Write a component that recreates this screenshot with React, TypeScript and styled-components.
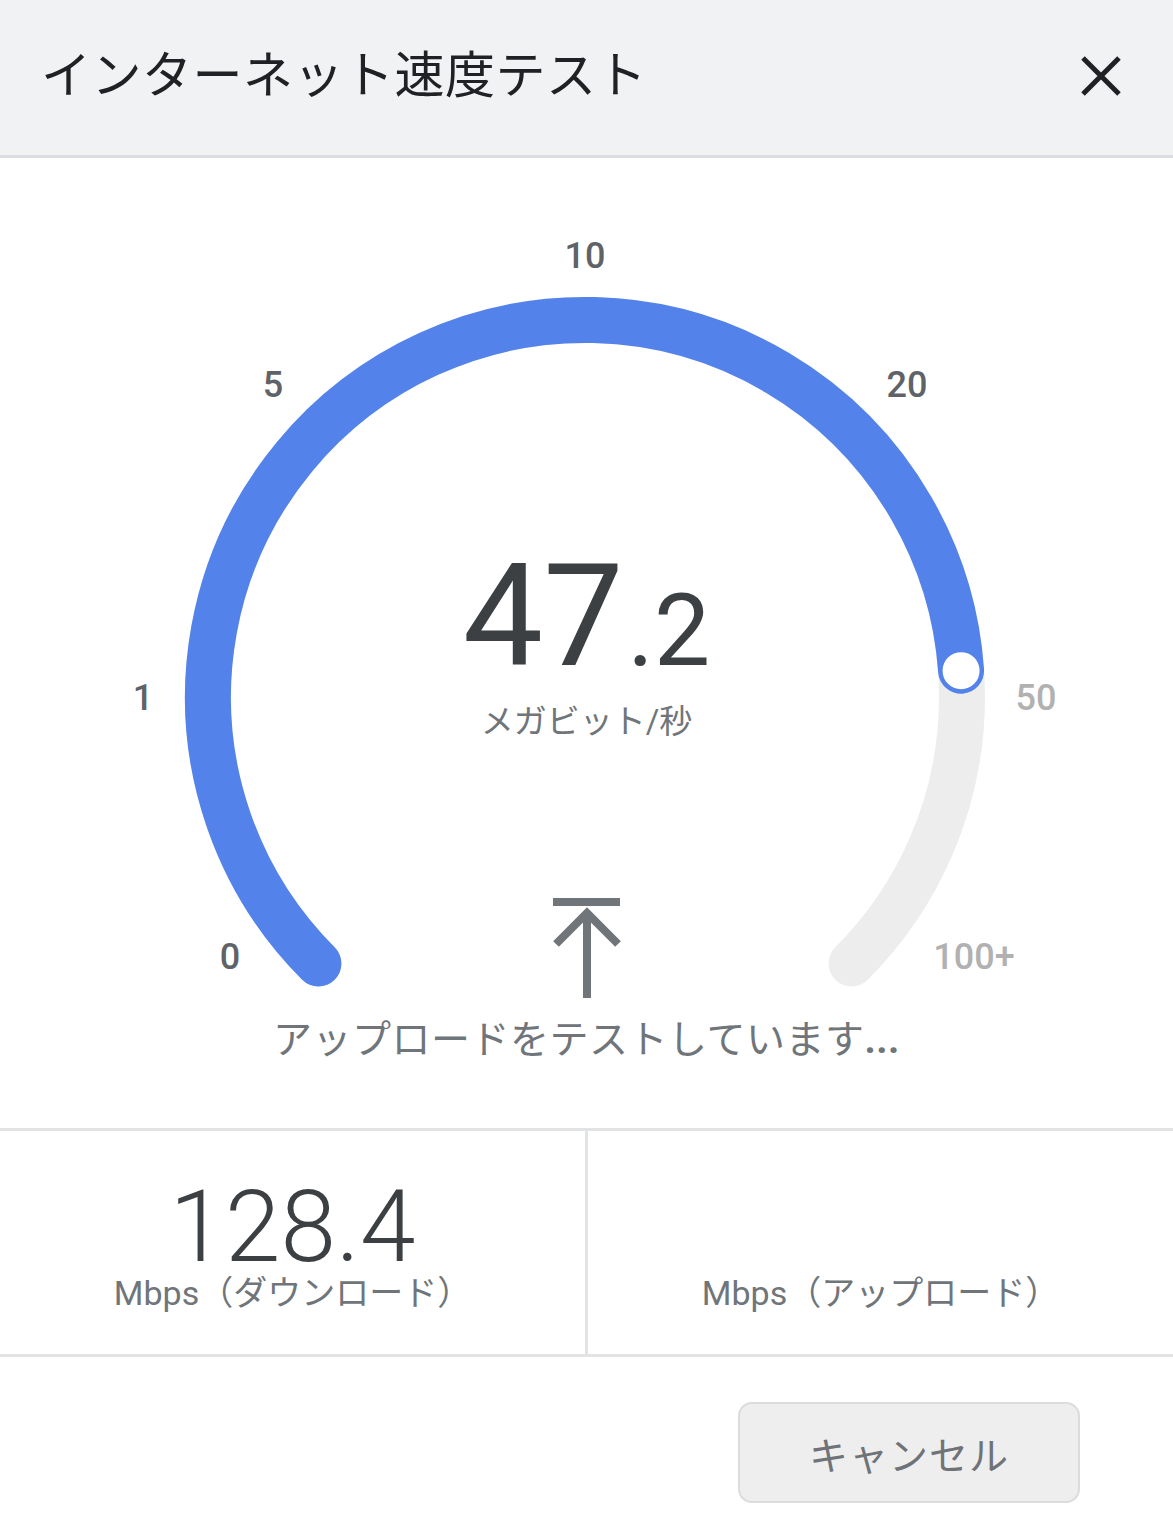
import React from "react";
import styled, { createGlobalStyle } from "styled-components";

const Global = createGlobalStyle`
  html, body { margin: 0; padding: 0; background: #ffffff; }
  body { font-family: Roboto, "Noto Sans CJK JP", sans-serif; -webkit-font-smoothing: antialiased; }
  * { box-sizing: border-box; }
`;

const JP = `Roboto, "Noto Sans CJK JP", sans-serif`;

const Page = styled.div`
  width: 1173px;
  height: 1536px;
  display: flex;
  flex-direction: column;
  background: #ffffff;
`;

const Header = styled.header`
  height: 158px;
  flex: none;
  display: flex;
  align-items: center;
  justify-content: space-between;
  padding: 0 50px 4px 41px;
  background: #f1f2f4;
  border-bottom: 3px solid #dcdde0;
`;

const Title = styled.h1`
  margin: 0;
  font-family: ${JP};
  font-weight: 400;
  font-size: 50px;
  line-height: 1.2;
  color: #202124;
  letter-spacing: 0.5px;
`;

const CloseButton = styled.button`
  width: 44px;
  height: 44px;
  padding: 0;
  border: none;
  background: transparent;
  display: flex;
  align-items: center;
  justify-content: center;
  cursor: pointer;
`;

const Stage = styled.section`
  height: 970px;
  flex: none;
  display: grid;
  & > * { grid-area: 1 / 1; }
`;

const GaugeSvg = styled.svg`
  display: block;
  width: 1173px;
  height: 970px;
`;

const Readout = styled.div`
  display: flex;
  flex-direction: column;
  align-items: center;
  padding-top: 387px;
`;

const Speed = styled.div`
  font-family: Roboto, sans-serif;
  font-weight: 400;
  font-size: 143px;
  line-height: 1;
  color: #3c4043;
  height: 143px;
  white-space: nowrap;
`;

const Fraction = styled.span`
  font-size: 100px;
  margin-left: 4px;
`;

const Unit = styled.div`
  margin-top: 13px;
  font-family: ${JP};
  font-size: 33px;
  line-height: 41px;
  color: #70757a;
`;

const ArrowIcon = styled.svg`
  display: block;
  margin-top: 156px;
  width: 70px;
  height: 100px;
`;

const Status = styled.div`
  margin-top: 19px;
  font-family: ${JP};
  font-size: 39px;
  line-height: 46px;
  color: #70757a;
  letter-spacing: 0.5px;
`;

const Dots = styled.span`
  font-weight: 700;
`;

const Stats = styled.section`
  flex: none;
  display: grid;
  grid-template-columns: 585px 1fr;
  border-top: 3px solid #e2e3e5;
  border-bottom: 3px solid #e2e3e5;
  height: 229px;
`;

const StatCell = styled.div<{ $divider?: boolean }>`
  display: flex;
  flex-direction: column;
  align-items: center;
  padding-top: 46px;
  border-left: ${(p) => (p.$divider ? "3px solid #e2e3e5" : "none")};
`;

const StatValue = styled.div`
  font-family: Roboto, sans-serif;
  font-weight: 300;
  font-size: 100px;
  line-height: 1;
  height: 96px;
  color: #3c4043;
`;

const StatLabel = styled.div`
  font-family: ${JP};
  font-size: 34px;
  line-height: 41px;
  color: #70757a;
  white-space: nowrap;
`;

const Footer = styled.footer`
  flex: 1;
  display: flex;
  justify-content: flex-end;
  align-items: flex-start;
  padding: 45px 93px 0 0;
`;

const CancelButton = styled.button`
  width: 342px;
  height: 101px;
  border: 2px solid #dcdcde;
  border-radius: 14px;
  background: #eeeeef;
  font-family: ${JP};
  font-size: 39px;
  color: #6f7377;
  letter-spacing: 1px;
  cursor: pointer;
`;

const BLUE = "#5383ea";
const TRACK = "#ededed";
const CX = 585;
const CY = 539;
const R = 377;

const pt = (deg: number, r = R) => {
  const a = (deg * Math.PI) / 180;
  return [CX + r * Math.cos(a), CY - r * Math.sin(a)];
};

const arc = (from: number, to: number) => {
  const [x1, y1] = pt(from);
  const [x2, y2] = pt(to);
  const large = from - to > 180 ? 1 : 0;
  return `M ${x1} ${y1} A ${R} ${R} 0 ${large} 1 ${x2} ${y2}`;
};

const labels: { t: string; x: number; y: number; on: boolean }[] = [
  { t: "0", x: 230, y: 799, on: true },
  { t: "1", x: 143, y: 540, on: true },
  { t: "5", x: 273, y: 227, on: true },
  { t: "10", x: 585, y: 98, on: true },
  { t: "20", x: 907, y: 227, on: true },
  { t: "50", x: 1036, y: 540, on: false },
  { t: "100+", x: 974, y: 799, on: false },
];

export default function App() {
  const valueAngle = 4;
  const [kx, ky] = pt(valueAngle);
  return (
    <>
      <Global />
      <Page>
        <Header>
          <Title>インターネット速度テスト</Title>
          <CloseButton aria-label="閉じる">
            <svg width="42" height="42" viewBox="0 0 42 42">
              <path d="M3 3 L39 39 M39 3 L3 39" stroke="#202124" strokeWidth="5" fill="none" />
            </svg>
          </CloseButton>
        </Header>

        <Stage>
          <GaugeSvg viewBox="0 0 1173 970">
            <path d={arc(225, -45)} stroke={TRACK} strokeWidth="46" fill="none" strokeLinecap="round" />
            <path d={arc(225, valueAngle)} stroke={BLUE} strokeWidth="46" fill="none" strokeLinecap="round" />
            <circle cx={kx} cy={ky} r="20" fill="#ffffff" stroke={BLUE} strokeWidth="3" />
            {labels.map((l) => (
              <text
                key={l.t}
                x={l.x}
                y={l.y}
                textAnchor="middle"
                dominantBaseline="central"
                fontFamily="Roboto, sans-serif"
                fontWeight={500}
                fontSize="36"
                fill={l.on ? "#5f6368" : "#b1b1b1"}
              >
                {l.t}
              </text>
            ))}
          </GaugeSvg>
          <Readout>
            <Speed>
              47<Fraction>.2</Fraction>
            </Speed>
            <Unit>メガビット/秒</Unit>
            <ArrowIcon viewBox="0 0 70 100">
              <path d="M1 4 H68" stroke="#70757a" strokeWidth="8" fill="none" />
              <path d="M4 46 L35 15 L66 46 M35 15 V100" stroke="#70757a" strokeWidth="8" fill="none" />
            </ArrowIcon>
            <Status>
              アップロードをテストしています<Dots>...</Dots>
            </Status>
          </Readout>
        </Stage>

        <Stats>
          <StatCell>
            <StatValue>128.4</StatValue>
            <StatLabel>Mbps（ダウンロード）</StatLabel>
          </StatCell>
          <StatCell $divider>
            <StatValue />
            <StatLabel>Mbps（アップロード）</StatLabel>
          </StatCell>
        </Stats>

        <Footer>
          <CancelButton>キャンセル</CancelButton>
        </Footer>
      </Page>
    </>
  );
}
